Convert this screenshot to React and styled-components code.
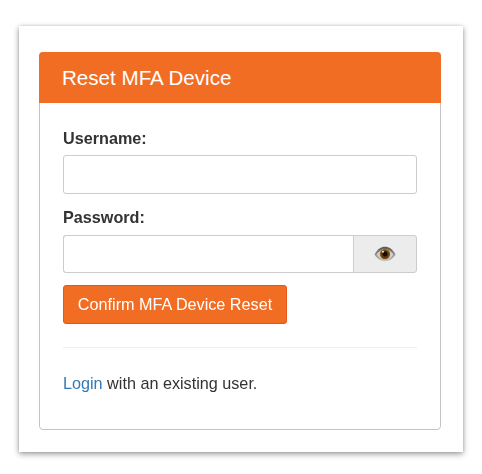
import React from "react";
import styled, { createGlobalStyle } from "styled-components";

const Global = createGlobalStyle`
  html, body { margin: 0; padding: 0; background: #fff; }
  * { box-sizing: border-box; }
  body { font-family: "Liberation Sans", Arial, sans-serif; color: #333; }
`;

const Page = styled.div`
  width: 482px;
  height: 474px;
  padding: 26px 19px 22px 19px;
  filter: blur(0.35px);
`;

const Card = styled.div`
  width: 444px;
  height: 426px;
  background: #fff;
  padding: 26px 22px 22px 20px;
  box-shadow: 0 2px 6px rgba(0, 0, 0, 0.4), 0 0 3px rgba(0, 0, 0, 0.12);
`;

const Panel = styled.section`
  height: 378px;
  border: 1px solid #c4c4c4;
  border-radius: 4px;
  display: flex;
  flex-direction: column;
`;

const Header = styled.h1`
  margin: -1px -1px 0;
  height: 51px;
  background: #f26d24;
  color: #fff;
  font-size: 20.6px;
  font-weight: 400;
  line-height: 52px;
  padding-left: 23px;
  border-radius: 4px 4px 0 0;
`;

const Body = styled.div`
  padding: 26px 23.5px 0 23px;
  display: flex;
  flex-direction: column;
`;

const Label = styled.label`
  display: block;
  font-size: 16.2px;
  font-weight: 700;
  line-height: 19px;
  margin-bottom: ${(p) => p.$mb}px;
  color: #333;
`;

const Input = styled.input`
  display: block;
  width: 100%;
  height: ${(p) => p.$h || 39}px;
  border: 1px solid #ccc;
  border-radius: ${(p) => (p.$joined ? "3px 0 0 3px" : "3px")};
  ${(p) => p.$joined && "border-right: 0;"}
  background: #fff;
  outline: none;
  flex: 1;
  min-width: 0;
`;

const Field = styled.div`
  margin-bottom: ${(p) => p.$mb}px;
`;

const InputGroup = styled.div`
  display: flex;
  height: 38px;
`;

const Addon = styled.div`
  width: 64px;
  height: 38px;
  flex: none;
  background: #ececec;
  border: 1px solid #ccc;
  border-radius: 0 3px 3px 0;
  display: flex;
  align-items: center;
  justify-content: center;
`;

const Button = styled.button`
  display: block;
  width: 224px;
  height: 39px;
  background: #f26d24;
  border: 1px solid #e8551c;
  border-radius: 3px;
  color: #fff;
  font-family: inherit;
  font-size: 16.2px;
  padding: 0;
  text-align: center;
`;

const Rule = styled.hr`
  border: 0;
  border-top: 1px solid #eee;
  margin: 23px 0 25px;
`;

const Note = styled.p`
  margin: 0;
  font-size: 16.2px;
  line-height: 20px;
  color: #333;
`;

const Link = styled.a`
  color: #337ab7;
  text-decoration: none;
`;

const Eye = () => (
  <svg width="22" height="16" viewBox="0 0 22 16" aria-hidden="true">
    <defs>
      <radialGradient id="iris" cx="0.5" cy="0.55" r="0.55">
        <stop offset="0" stopColor="#2f1605" />
        <stop offset="0.55" stopColor="#5f3810" />
        <stop offset="1" stopColor="#ab7312" />
      </radialGradient>
      <linearGradient id="lid" x1="0" y1="0" x2="0" y2="1">
        <stop offset="0" stopColor="#555" />
        <stop offset="1" stopColor="#c4c4c4" />
      </linearGradient>
    </defs>
    <path d="M0.500 8.500C3.500 3 7 0.800 11 0.800s7.500 2.200 10.500 7.700c-3 4.800-6.500 6.700-10.500 6.700s-7.500-1.900-10.500-6.700Z" fill="url(#lid)" />
    <path d="M2.500 8.500C5 5 8 3 11 3s6 2 8.500 5.500c-2.500 3.400-5.500 5-8.500 5s-6-1.600-8.500-5Z" fill="#d2cfcc" />
    <circle cx="11" cy="8" r="5.200" fill="url(#iris)" />
    <circle cx="11" cy="7.800" r="2.400" fill="#140a04" />
    <circle cx="9" cy="5.800" r="1" fill="#e8e4de" />
  </svg>
);

export default function App() {
  return (
    <Page>
      <Global />
      <Card>
        <Panel>
          <Header>Reset MFA Device</Header>
          <Body>
            <Field $mb={14}>
              <Label htmlFor="username" $mb={7}>Username:</Label>
              <Input id="username" type="text" />
            </Field>
            <Field $mb={12}>
              <Label htmlFor="password" $mb={8}>Password:</Label>
              <InputGroup>
                <Input id="password" type="password" $h={38} $joined />
                <Addon><Eye /></Addon>
              </InputGroup>
            </Field>
            <Button type="button">Confirm MFA Device Reset</Button>
            <Rule />
            <Note><Link href="#">Login</Link> with an existing user.</Note>
          </Body>
        </Panel>
      </Card>
    </Page>
  );
}
